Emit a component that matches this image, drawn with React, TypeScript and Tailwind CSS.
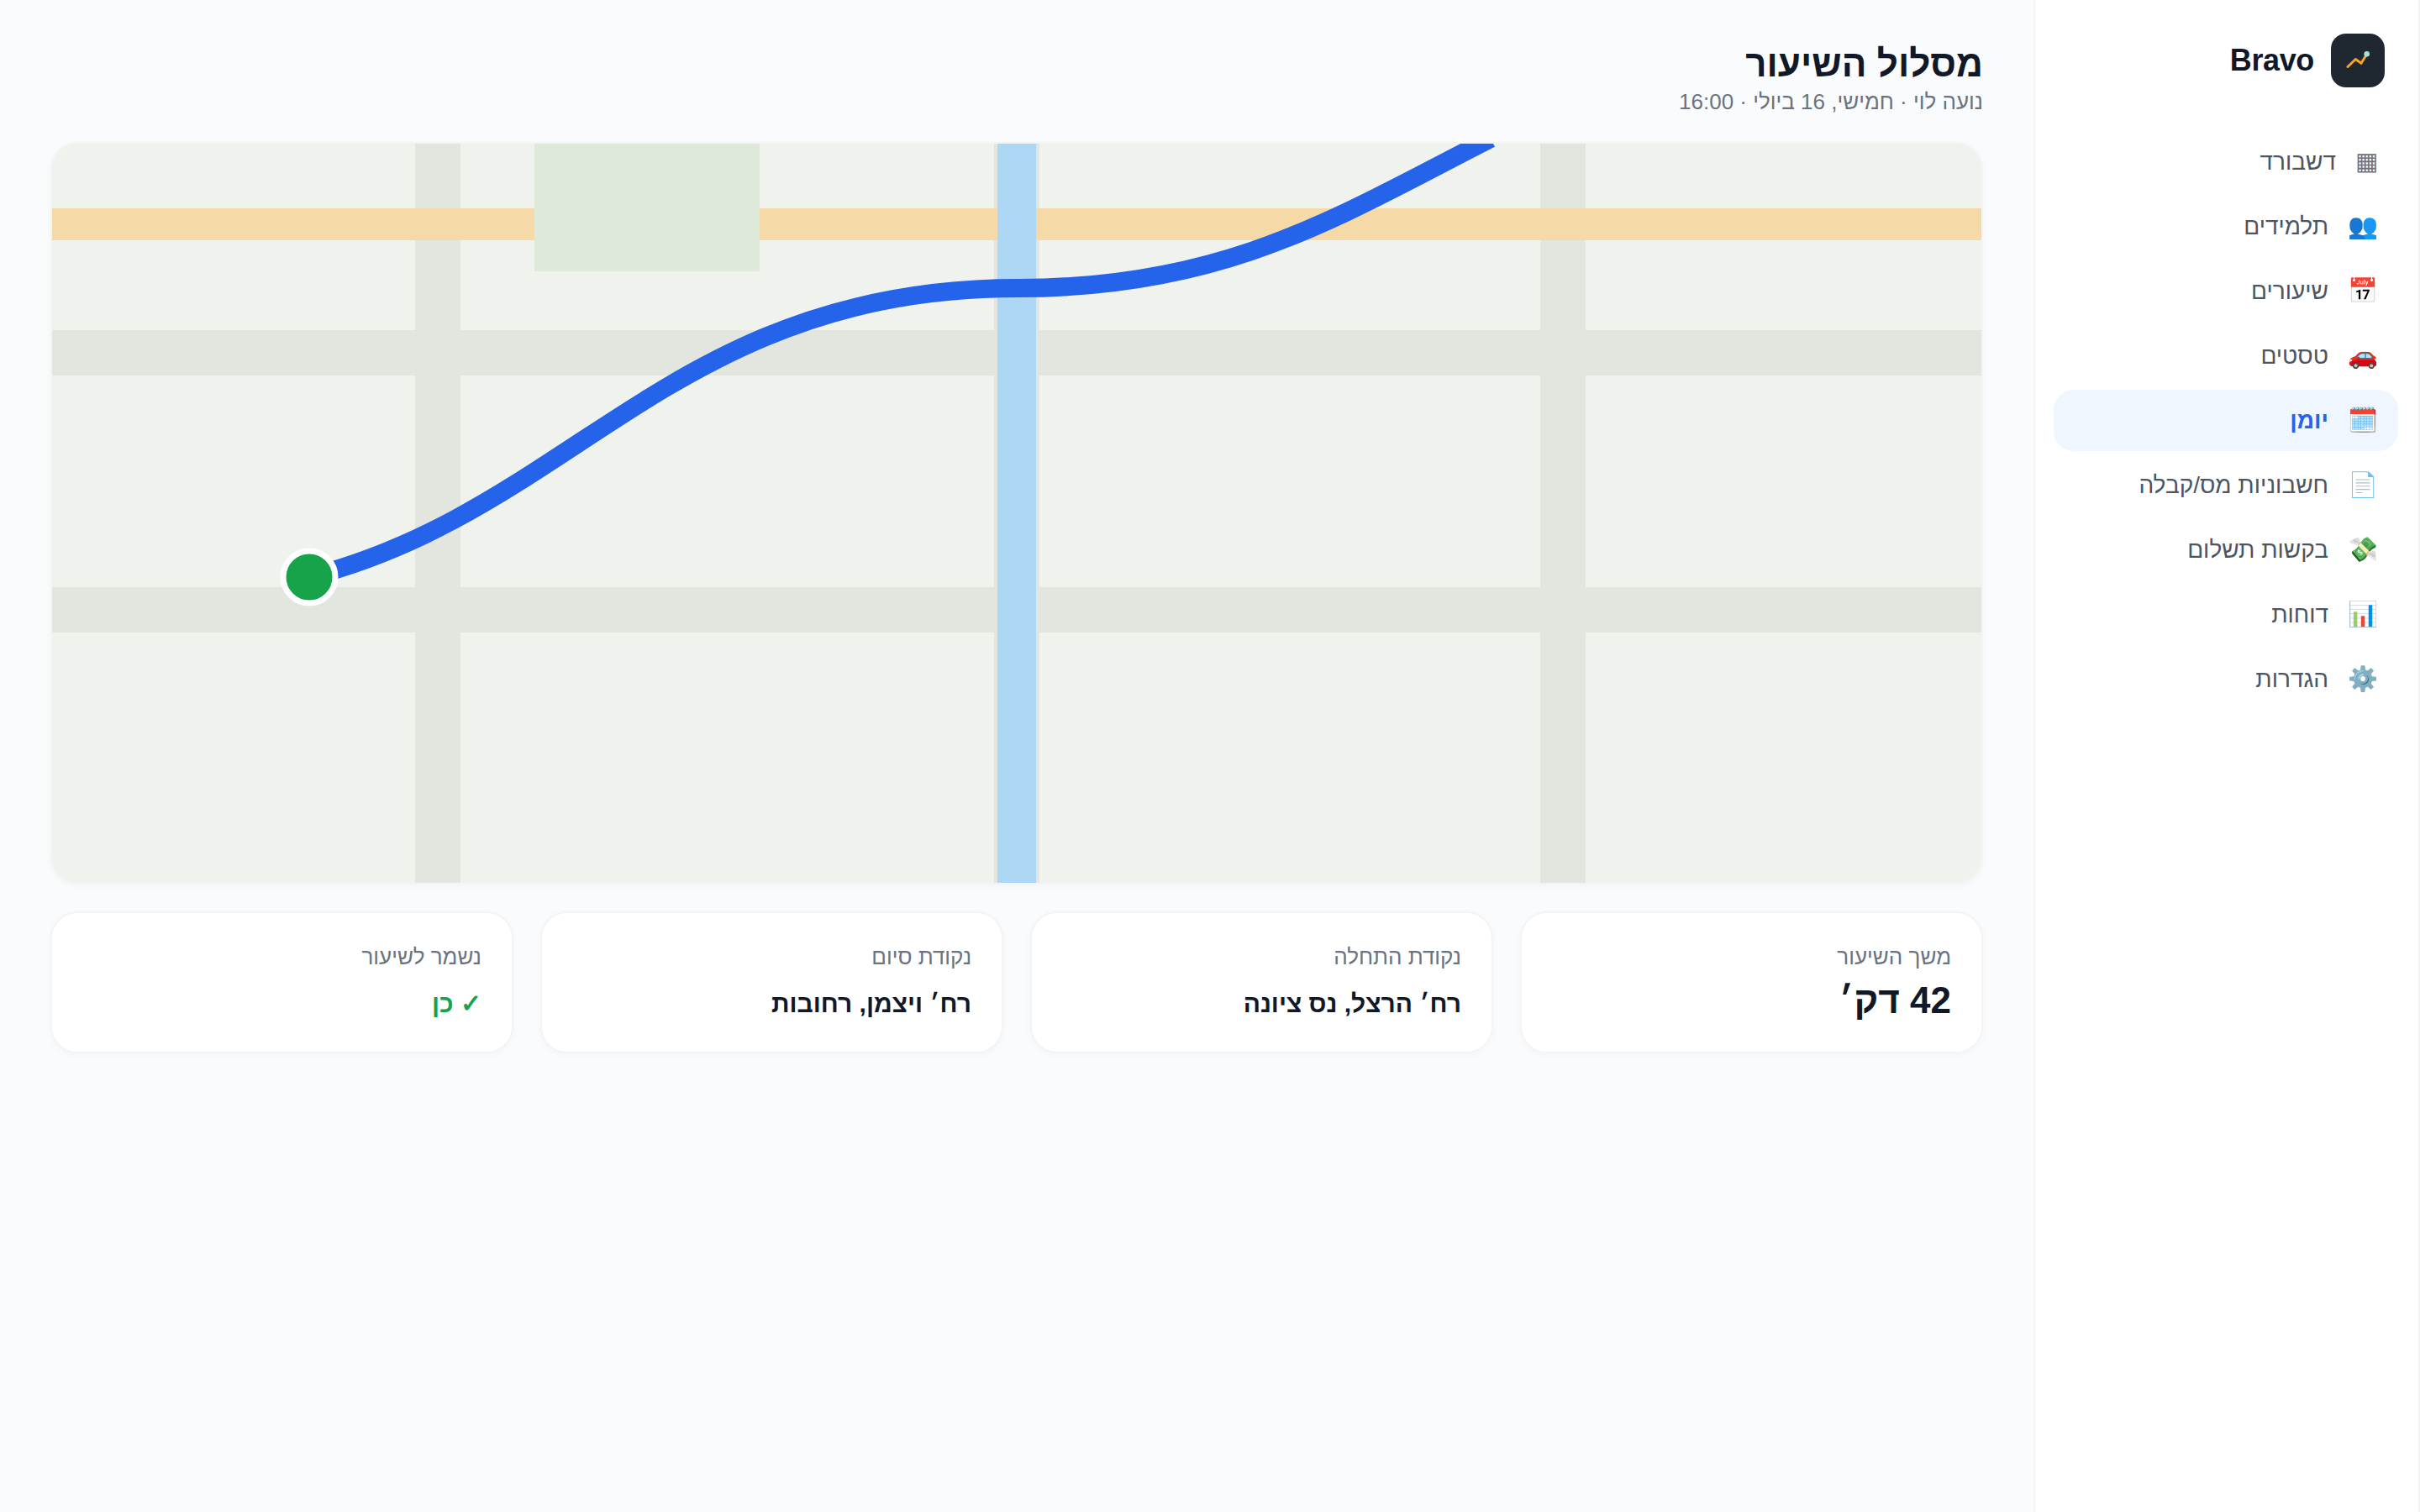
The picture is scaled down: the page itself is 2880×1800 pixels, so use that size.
const navItems = [
  { icon: "▦", label: "דשבורד" },
  { icon: "👥", label: "תלמידים" },
  { icon: "📅", label: "שיעורים" },
  { icon: "🚗", label: "טסטים" },
  { icon: "🗓️", label: "יומן", active: true },
  { icon: "📄", label: "חשבוניות מס/קבלה" },
  { icon: "💸", label: "בקשות תשלום" },
  { icon: "📊", label: "דוחות" },
  { icon: "⚙️", label: "הגדרות" },
];

function Sidebar() {
  return (
    <aside className="w-[460px] shrink-0 min-h-[1800px] bg-white border-x-2 border-[#f3f4f6] pr-[24px] pl-[22px]">
      <div className="flex items-center gap-5 h-[144px] mb-3 pr-4">
        <div className="w-16 h-16 rounded-[18px] bg-[#1f2730]">
          <svg width="64" height="64" viewBox="0 0 64 64" fill="none">
            <path d="M20 39.5 L29.3 30.5 L36 35.3 L42.7 24.5" stroke="#f5a623" strokeWidth="3" strokeLinecap="round" strokeLinejoin="round" />
            <circle cx="42.7" cy="24.3" r="3.3" fill="#a7e3d0" />
          </svg>
        </div>
        <span className="text-[36px] font-bold text-[#111827] tracking-[-0.01em]">Bravo</span>
      </div>
      <nav className="flex flex-col gap-1">
        {navItems.map((item) => (
          <div
            key={item.label}
            className={
              item.active
                ? "h-[73px] rounded-3xl bg-[#eff6ff] text-[#2563eb] font-semibold flex items-center gap-[23px] pr-[24px] text-[28px]"
                : "h-[73px] rounded-3xl text-[#4b5563] flex items-center gap-[23px] pr-[24px] text-[28px]"
            }
          >
            <span className="text-[29px] text-[#6b7280]">{item.icon}</span>
            <span>{item.label}</span>
          </div>
        ))}
      </nav>
    </aside>
  );
}

function RouteMap() {
  return (
    <div className="h-[884px] rounded-[32px] border-2 border-[#f3f4f6] overflow-hidden bg-[#f0f2ed] shadow-[0_2px_8px_rgba(0,0,0,0.03)]">
      <svg viewBox="0 0 2296 880" width="2296" height="880" className="block">
        <rect x="0" y="222" width="2296" height="54" fill="#e3e6df" />
        <rect x="0" y="528" width="2296" height="54" fill="#e3e6df" />
        <rect x="432" y="0" width="54" height="880" fill="#e3e6df" />
        <rect x="1771" y="0" width="54" height="880" fill="#e3e6df" />
        <rect x="1121" y="0" width="54" height="880" fill="#e3e6df" />
        <rect x="0" y="77" width="2296" height="38" fill="#f5d9a6" />
        <rect x="574" y="0" width="268" height="152" fill="#dfe9d9" />
        <rect x="1125" y="0" width="46" height="880" fill="#aed6f5" />
        <path d="M306 516 C620 436 740 172 1150 172 C1400 172 1535 84 1712 -6" fill="none" stroke="#2563eb" strokeWidth="22" />
        <circle cx="306" cy="516" r="31" fill="#16a34a" stroke="#ffffff" strokeWidth="7" />
      </svg>
    </div>
  );
}

function InfoCard({ label, value, className }: { label: string; value: string; className: string }) {
  return (
    <div className="h-[169px] rounded-[32px] border-2 border-[#f3f4f6] bg-white shadow-[0_2px_8px_rgba(0,0,0,0.03)] px-[36px] pt-[32px]">
      <div className="text-[26px] leading-[40px] text-[#6b7280]">{label}</div>
      <div className={className}>{value}</div>
    </div>
  );
}

export default function App() {
  return (
    <div dir="rtl" className="flex min-h-screen bg-[#fafbfd] font-['Liberation_Sans',sans-serif]">
      <Sidebar />
      <main className="flex-1 pr-[60px] pl-[60px] pt-[47px]">
        <h1 className="text-[44px] leading-[57px] font-bold text-[#111827]">מסלול השיעור</h1>
        <p className="text-[26px] leading-[34px] text-[#6b7280] mb-[31px]">נועה לוי · חמישי, 16 ביולי · 16:00</p>
        <RouteMap />
        <div className="grid grid-cols-4 gap-8 mt-8">
          <InfoCard label="משך השיעור" value="42 דק׳" className="text-[44px] leading-[56px] font-bold text-[#111827] mt-1" />
          <InfoCard label="נקודת התחלה" value="רח׳ הרצל, נס ציונה" className="text-[30px] leading-[44px] font-bold text-[#111827] mt-[14px]" />
          <InfoCard label="נקודת סיום" value="רח׳ ויצמן, רחובות" className="text-[30px] leading-[44px] font-bold text-[#111827] mt-[14px]" />
          <InfoCard label="נשמר לשיעור" value="✓ כן" className="text-[30px] leading-[44px] font-bold text-[#16a34a] mt-[14px]" />
        </div>
      </main>
    </div>
  );
}
